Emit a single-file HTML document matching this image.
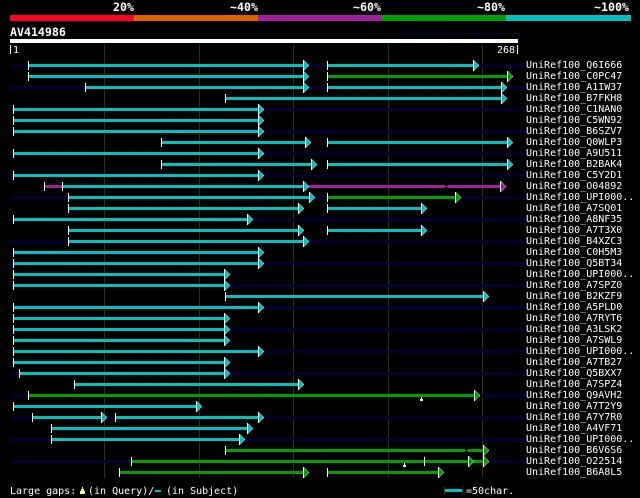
<!DOCTYPE html>
<html><head><meta charset="utf-8"><title>AV414986</title>
<style>
html,body{margin:0;padding:0;background:#000;width:640px;height:498px;overflow:hidden}
svg{display:block}
text{font-family:"DejaVu Sans Mono","Liberation Mono",monospace;font-size:10px;fill:#fff;white-space:pre}
.b{font-weight:bold;font-size:11.6px}
.f{font-weight:bold;font-size:8.3px;fill:#000033}
</style></head><body>
<svg width="640" height="498" viewBox="0 0 640 498" xmlns="http://www.w3.org/2000/svg" shape-rendering="crispEdges">
<defs>
<g id="a"><polygon points="0,-4 1,-4 6,1.5 1,7 0,7" fill="#fff"/><polygon points="1,-3 5.5,1.5 1,6" fill="#00c0c0"/></g>
<g id="g"><polygon points="0,-4 1,-4 6,1.5 1,7 0,7" fill="#fff"/><polygon points="1,-3 5.5,1.5 1,6" fill="#00a000"/></g>
<g id="p"><polygon points="0,-4 1,-4 6,1.5 1,7 0,7" fill="#fff"/><polygon points="1,-3 5.5,1.5 1,6" fill="#a020a0"/></g>
</defs>
<rect width="640" height="498" fill="#000"/>
<rect x="10" y="15" width="124" height="6" fill="#ff0022"/>
<rect x="134" y="15" width="124" height="6" fill="#e06000"/>
<rect x="258" y="15" width="124" height="6" fill="#a020a0"/>
<rect x="382" y="15" width="124" height="6" fill="#00a000"/>
<rect x="506" y="15" width="125" height="6" fill="#00c0c0"/>
<text class="b" x="113" y="11">20%</text>
<text class="b" x="230" y="11">~40%</text>
<text class="b" x="353" y="11">~60%</text>
<text class="b" x="477" y="11">~80%</text>
<text class="b" x="594" y="11">~100%</text>
<text class="b" x="10" y="36">AV414986</text>
<text class="f" x="402" y="37">AlignView.pm Beta rel.7</text>
<rect x="10" y="39" width="508" height="4" fill="#fff"/>
<rect x="10" y="45" width="1" height="9" fill="#fff"/>
<text x="13" y="53">1</text>
<text x="497" y="53">268</text>
<rect x="517" y="45" width="1" height="9" fill="#fff"/>
<!-- grid -->
<path d="M104 44h1v434h-1zM199 44h1v434h-1zM293 44h1v434h-1zM388 44h1v434h-1zM482 44h1v434h-1z" fill="#333300"/>
<!-- navy lines -->
<path fill="#000033" d="M10 64H526v3H10zM10 86H526v3H10zM10 108H526v3H10zM10 130H526v3H10zM10 152H526v3H10zM10 174H526v3H10zM10 196H526v3H10zM10 218H526v3H10zM10 240H526v3H10zM10 262H526v3H10zM10 284H526v3H10zM10 306H526v3H10zM10 328H526v3H10zM10 350H526v3H10zM10 372H526v3H10zM10 394H526v3H10zM10 416H526v3H10zM10 438H526v3H10zM10 460H526v3H10z"/>
<!-- cyan bars -->
<path fill="#00c0c0" d="M28 64H304v3H28zM327 64H473v3H327zM28 75H304v3H28zM85 86H304v3H85zM327 86H501v3H327zM225 97H501v3H225zM13 108H258v3H13zM13 119H258v3H13zM13 130H258v3H13zM161 141H305v3H161zM327 141H507v3H327zM13 152H258v3H13zM161 163H311v3H161zM327 163H507v3H327zM13 174H258v3H13zM62 185H303v3H62zM68 196H309v3H68zM68 207H298v3H68zM327 207H421v3H327zM13 218H247v3H13zM68 229H298v3H68zM327 229H421v3H327zM68 240H303v3H68zM13 251H258v3H13zM13 262H258v3H13zM13 273H224v3H13zM13 284H224v3H13zM225 295H483v3H225zM13 306H258v3H13zM13 317H224v3H13zM13 328H224v3H13zM13 339H224v3H13zM13 350H258v3H13zM13 361H224v3H13zM19 372H224v3H19zM74 383H298v3H74zM13 405H196v3H13zM32 416H101v3H32zM115 416H258v3H115zM51 427H247v3H51zM51 438H239v3H51z"/>
<!-- green bars -->
<path fill="#00a000" d="M327 75H507v3H327zM327 196H455v3H327zM28 394H474v3H28zM225 449H465v3H225zM468 449H483v3H468zM131 460H483v3H131zM119 471H303v3H119zM327 471H438v3H327z"/>
<rect x="465" y="450" width="3" height="1" fill="#00a000"/>
<!-- purple -->
<path fill="#a020a0" d="M44 185H62v3H44zM308 185H445v3H308zM448 185H500v3H448z"/>
<rect x="445" y="186" width="3" height="1" fill="#a020a0"/>
<!-- start ticks -->
<path fill="#fff" d="M28 61h1v9h-1zM327 61h1v9h-1zM28 72h1v9h-1zM327 72h1v9h-1zM85 83h1v9h-1zM327 83h1v9h-1zM225 94h1v9h-1zM13 105h1v9h-1zM13 116h1v9h-1zM13 127h1v9h-1zM161 138h1v9h-1zM327 138h1v9h-1zM13 149h1v9h-1zM161 160h1v9h-1zM327 160h1v9h-1zM13 171h1v9h-1zM44 182h1v9h-1zM62 182h1v9h-1zM68 193h1v9h-1zM327 193h1v9h-1zM68 204h1v9h-1zM327 204h1v9h-1zM13 215h1v9h-1zM68 226h1v9h-1zM327 226h1v9h-1zM68 237h1v9h-1zM13 248h1v9h-1zM13 259h1v9h-1zM13 270h1v9h-1zM13 281h1v9h-1zM225 292h1v9h-1zM13 303h1v9h-1zM13 314h1v9h-1zM13 325h1v9h-1zM13 336h1v9h-1zM13 347h1v9h-1zM13 358h1v9h-1zM19 369h1v9h-1zM74 380h1v9h-1zM28 391h1v9h-1zM13 402h1v9h-1zM32 413h1v9h-1zM115 413h1v9h-1zM51 424h1v9h-1zM51 435h1v9h-1zM225 446h1v9h-1zM131 457h1v9h-1zM424 457h1v9h-1zM119 468h1v9h-1zM327 468h1v9h-1z"/>
<!-- arrows -->
<use href="#a" x="303" y="64"/><use href="#a" x="473" y="64"/>
<use href="#a" x="303" y="75"/><use href="#g" x="507" y="75"/>
<use href="#a" x="303" y="86"/><use href="#a" x="501" y="86"/>
<use href="#a" x="501" y="97"/>
<use href="#a" x="258" y="108"/><use href="#a" x="258" y="119"/><use href="#a" x="258" y="130"/>
<use href="#a" x="305" y="141"/><use href="#a" x="507" y="141"/>
<use href="#a" x="258" y="152"/>
<use href="#a" x="311" y="163"/><use href="#a" x="507" y="163"/>
<use href="#a" x="258" y="174"/>
<use href="#a" x="303" y="185"/><use href="#p" x="500" y="185"/>
<use href="#a" x="309" y="196"/><use href="#g" x="455" y="196"/>
<use href="#a" x="298" y="207"/><use href="#a" x="421" y="207"/>
<use href="#a" x="247" y="218"/>
<use href="#a" x="298" y="229"/><use href="#a" x="421" y="229"/>
<use href="#a" x="303" y="240"/>
<use href="#a" x="258" y="251"/><use href="#a" x="258" y="262"/>
<use href="#a" x="224" y="273"/><use href="#a" x="224" y="284"/>
<use href="#a" x="483" y="295"/>
<use href="#a" x="258" y="306"/>
<use href="#a" x="224" y="317"/><use href="#a" x="224" y="328"/><use href="#a" x="224" y="339"/>
<use href="#a" x="258" y="350"/>
<use href="#a" x="224" y="361"/><use href="#a" x="224" y="372"/>
<use href="#a" x="298" y="383"/>
<use href="#g" x="474" y="394"/>
<use href="#a" x="196" y="405"/>
<use href="#a" x="101" y="416"/><use href="#a" x="258" y="416"/>
<use href="#a" x="247" y="427"/>
<use href="#a" x="239" y="438"/>
<use href="#g" x="483" y="449"/>
<use href="#g" x="468" y="460"/><use href="#g" x="483" y="460"/>
<use href="#g" x="303" y="471"/><use href="#g" x="438" y="471"/>
<!-- gap markers -->
<path fill="#ffff99" d="M421 397h1v2h-1zM420 399h3v2h-3zM404 463h1v2h-1zM403 465h3v2h-3zM82 487h1v2h-1zM81 489h3v2h-3zM80 491h5v3h-5z"/>
<!-- labels -->
<text x="526" y="68">UniRef100_Q6I666</text>
<text x="526" y="79">UniRef100_C0PC47</text>
<text x="526" y="90">UniRef100_A1IW37</text>
<text x="526" y="101">UniRef100_B7FKH8</text>
<text x="526" y="112">UniRef100_C1NAN0</text>
<text x="526" y="123">UniRef100_C5WN92</text>
<text x="526" y="134">UniRef100_B6SZV7</text>
<text x="526" y="145">UniRef100_Q0WLP3</text>
<text x="526" y="156">UniRef100_A9U511</text>
<text x="526" y="167">UniRef100_B2BAK4</text>
<text x="526" y="178">UniRef100_C5Y2D1</text>
<text x="526" y="189">UniRef100_O04892</text>
<text x="526" y="200">UniRef100_UPI000..</text>
<text x="526" y="211">UniRef100_A7SQ01</text>
<text x="526" y="222">UniRef100_A8NF35</text>
<text x="526" y="233">UniRef100_A7T3X0</text>
<text x="526" y="244">UniRef100_B4XZC3</text>
<text x="526" y="255">UniRef100_C0H5M3</text>
<text x="526" y="266">UniRef100_Q5BT34</text>
<text x="526" y="277">UniRef100_UPI000..</text>
<text x="526" y="288">UniRef100_A7SPZ0</text>
<text x="526" y="299">UniRef100_B2KZF9</text>
<text x="526" y="310">UniRef100_A5PLD0</text>
<text x="526" y="321">UniRef100_A7RYT6</text>
<text x="526" y="332">UniRef100_A3LSK2</text>
<text x="526" y="343">UniRef100_A7SWL9</text>
<text x="526" y="354">UniRef100_UPI000..</text>
<text x="526" y="365">UniRef100_A7TB27</text>
<text x="526" y="376">UniRef100_Q5BXX7</text>
<text x="526" y="387">UniRef100_A7SPZ4</text>
<text x="526" y="398">UniRef100_Q9AVH2</text>
<text x="526" y="409">UniRef100_A7T2Y9</text>
<text x="526" y="420">UniRef100_A7Y7R0</text>
<text x="526" y="431">UniRef100_A4VF71</text>
<text x="526" y="442">UniRef100_UPI000..</text>
<text x="526" y="453">UniRef100_B6V6S6</text>
<text x="526" y="464">UniRef100_O22514</text>
<text x="526" y="475">UniRef100_B6A8L5</text>
<!-- legend -->
<text x="10" y="494">Large gaps:</text>
<text x="88" y="494">(in Query)/</text>
<rect x="155" y="490" width="6" height="2" fill="#00c0c0"/>
<text x="166" y="494">(in Subject)</text>
<rect x="444" y="486" width="1" height="9" fill="#333300"/>
<rect x="462" y="486" width="1" height="9" fill="#333300"/>
<rect x="445" y="489" width="17" height="3" fill="#00c0c0"/>
<text x="466" y="494">=50char.</text>
</svg>
</body></html>
